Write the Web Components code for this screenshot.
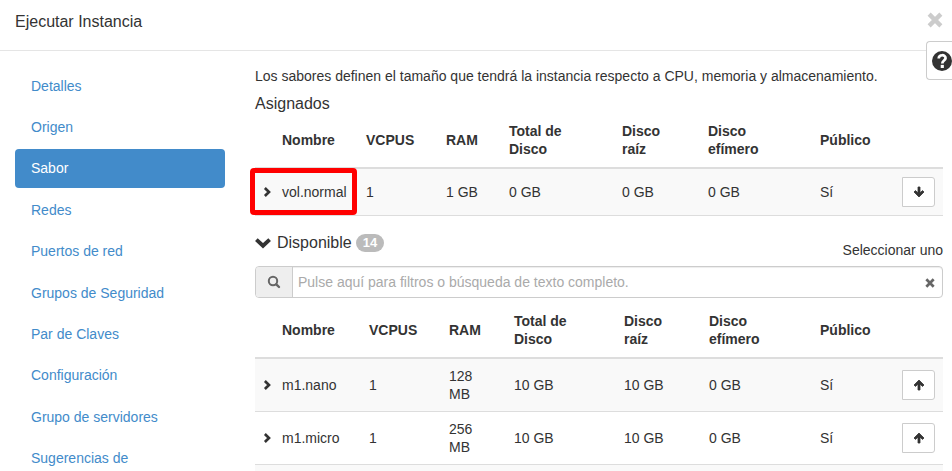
<!DOCTYPE html>
<html lang="es">
<head>
<meta charset="utf-8">
<title>Ejecutar Instancia</title>
<style>
body { margin: 0; background: #fff; color: #333; font: 14px/18px "Liberation Sans", Arial, sans-serif; }
</style>
</head>
<body>
<launch-dialog heading="Ejecutar Instancia">
  <step-nav slot="nav" current="Sabor"></step-nav>
  <flavor-step></flavor-step>
</launch-dialog>

<script>
const ICONS = {
  right: '<path d="M2.4 2 L7.6 7 L2.4 12" fill="none" stroke="currentColor" stroke-width="3.4"/>',
  down: '<path d="M1.2 4 L7 9.4 L12.8 4" fill="none" stroke="currentColor" stroke-width="3.4"/>',
  arrowUp: '<path d="M7 2 L12 7 L10.6 8.4 L8 6.2 V12 H6 V6.2 L3.4 8.4 L2 7 Z" stroke="currentColor" stroke-width=".8" stroke-linejoin="round"/>',
  arrowDown: '<path d="M7 12 L12 7 L10.6 5.6 L8 7.8 V2 H6 V7.8 L3.4 5.6 L2 7 Z" stroke="currentColor" stroke-width=".8" stroke-linejoin="round"/>',
  search: '<circle cx="6" cy="6" r="4.2" fill="none" stroke="currentColor" stroke-width="2"/><path d="M9.3 9.3 L12 12" stroke="currentColor" stroke-width="2.4" stroke-linecap="round"/>',
  times: '<path d="M3.2 3.2 L10.8 10.8 M10.8 3.2 L3.2 10.8" stroke="currentColor" stroke-width="3.8" stroke-linecap="square"/>',
  help: '<circle cx="7" cy="7" r="7"/><path d="M4.7 5.2 C4.8 2.2 9.6 2.3 9.5 5 C9.4 6.7 7.2 6.7 7.2 8.7" fill="none" stroke="#fff" stroke-width="1.9"/><path d="M6.1 9.7 H8.3 V11.9 H6.1 Z" fill="#fff"/>'
};

class UiIcon extends HTMLElement {
  connectedCallback() {
    this.attachShadow({ mode: 'open' }).innerHTML = `
      <style>:host{display:inline-block;width:14px;height:14px;flex:none} svg{display:block;width:100%;height:100%;overflow:visible}</style>
      <svg viewBox="0 0 14 14" fill="currentColor" aria-hidden="true">${ICONS[this.getAttribute('name')]}</svg>`;
  }
}
customElements.define('ui-icon', UiIcon);

class LaunchDialog extends HTMLElement {
  connectedCallback() {
    this.attachShadow({ mode: 'open' }).innerHTML = `
      <style>
        :host{display:block;height:100vh;overflow:hidden}
        header{display:flex;justify-content:space-between;align-items:flex-start;padding:12px 9px 18px 15px;border-bottom:1px solid #e5e5e5}
        h1{margin:0;font-size:16px;line-height:20px;font-weight:400}
        button{font:inherit;cursor:pointer}
        .close{border:0;background:none;padding:0;color:#ccc;line-height:0}
        .close ui-icon{width:16px;height:16px}
        .help{position:absolute;top:41px;right:0;width:26px;height:39px;padding:0 0 0 5px;border:1px solid #ccc;border-right:0;border-radius:4px 0 0 4px;background:#fff;color:#333;line-height:0}
        .help ui-icon{width:20px;height:20px}
        .body{display:grid;grid-template-columns:210px minmax(0,1fr);gap:30px;padding:15px 9px 0 15px}
      </style>
      <header><h1>${this.getAttribute('heading')}</h1>
        <button class="close" aria-label="Cerrar"><ui-icon name="times"></ui-icon></button></header>
      <button class="help" aria-label="Ayuda"><ui-icon name="help"></ui-icon></button>
      <div class="body"><slot name="nav"></slot><slot></slot></div>`;
  }
}
customElements.define('launch-dialog', LaunchDialog);

class StepNav extends HTMLElement {
  connectedCallback() {
    const steps = ['Detalles', 'Origen', 'Sabor', 'Redes', 'Puertos de red', 'Grupos de Seguridad', 'Par de Claves', 'Configuración', 'Grupo de servidores', 'Sugerencias de'];
    const current = this.getAttribute('current');
    this.attachShadow({ mode: 'open' }).innerHTML = `
      <style>
        :host{display:block}
        ul{list-style:none;margin:0;padding:0;display:grid;gap:2px;grid-auto-rows:1fr;min-height:calc(100vh - 59px)}
        li{display:grid}
        a{display:flex;align-items:center;padding:10px 16px;color:#428bca;text-decoration:none;border-radius:4px}
        a[aria-current]{background:#428bca;color:#fff}
      </style>
      <nav><ul>${steps.map(s => `<li><a href="#"${s === current ? ' aria-current="step"' : ''}>${s}</a></li>`).join('')}</ul></nav>`;
  }
}
customElements.define('step-nav', StepNav);

class FlavorTable extends HTMLElement {
  connectedCallback() {
    const widths = this.getAttribute('columns').split(' ');
    const rows = JSON.parse(this.getAttribute('rows'));
    const move = this.getAttribute('move');
    const heads = ['', 'Nombre', 'VCPUS', 'RAM', 'Total de Disco', 'Disco raíz', 'Disco efímero', 'Público', ''];
    this.attachShadow({ mode: 'open' }).innerHTML = `
      <style>
        :host{display:block}
        table{width:100%;table-layout:fixed;border-collapse:separate;border-spacing:0}
        th,td{padding:8px;text-align:left}
        thead th,thead td{padding-bottom:9px;border-bottom:2px solid #ddd}
        .wide{padding-right:20px}
        tbody td{border-bottom:1px solid #ddd}
        td:first-child{padding-right:0}
        tbody tr:nth-child(odd){background:#f9f9f9}
        tbody tr{position:relative}
        button{cursor:pointer;color:#333;line-height:0}
        .toggle{display:block;border:0;background:none;padding:0}
        .toggle ui-icon{width:11px;height:14px}
        .move{display:block;width:33px;height:30px;padding:0;background:#fff;border:1px solid #ccc;border-radius:0 3px 3px 0}
        .mark{position:absolute;left:-5px;top:-1px;width:97px;height:37px;border:5px solid #f00;border-radius:4px;pointer-events:none}
      </style>
      <table><colgroup>${widths.map(w => `<col style="width:${w}px">`).join('')}</colgroup>
      <thead><tr>${heads.map((h, i) => h ? `<th scope="col"${i > 3 && i < 7 ? ' class="wide"' : ''}>${h}</th>` : '<td></td>').join('')}</tr></thead>
      <tbody>${rows.map(r => r.length ? `<tr><td><button class="toggle" aria-label="Ver detalles"><ui-icon name="right"></ui-icon></button>${this.hasAttribute('marked') ? '<div class="mark"></div>' : ''}</td>
        ${r.map((c, i) => `<td${i === 2 ? ' class="wide"' : ''}>${c}</td>`).join('')}
        <td><button class="move" aria-label="Mover ${r[0]}"><ui-icon name="${move}"></ui-icon></button></td></tr>` : '<tr><td colspan="9"></td></tr>').join('')}</tbody></table>`;
  }
}
customElements.define('flavor-table', FlavorTable);

class FilterBar extends HTMLElement {
  connectedCallback() {
    this.attachShadow({ mode: 'open' }).innerHTML = `
      <style>
        :host{display:flex;height:30px;border:1px solid #ccc;border-radius:4px;overflow:hidden;box-shadow:inset 0 1px 1px rgba(0,0,0,.075)}
        label{display:flex;align-items:center;justify-content:center;width:36px;background:#eee;border-right:1px solid #ccc;color:#666}
        input{flex:1;min-width:0;border:0;outline:0;background:none;padding:0 5px;font:inherit;color:#333}
        input::placeholder{color:#aaa;opacity:1}
        button{border:0;background:none;padding:2px 7px 0 0;color:#666;line-height:0}
        button ui-icon{width:10px;height:10px}
      </style>
      <label for="q" aria-label="Filtro"><ui-icon name="search"></ui-icon></label>
      <input id="q" type="text" placeholder="Pulse aquí para filtros o búsqueda de texto completo.">
      <button aria-label="Borrar"><ui-icon name="times"></ui-icon></button>`;
  }
}
customElements.define('filter-bar', FilterBar);

class FlavorStep extends HTMLElement {
  connectedCallback() {
    const assigned = [['vol.normal', '1', '1 GB', '0 GB', '0 GB', '0 GB', 'Sí']];
    const available = [
      ['m1.nano', '1', '128 MB', '10 GB', '10 GB', '0 GB', 'Sí'],
      ['m1.micro', '1', '256 MB', '10 GB', '10 GB', '0 GB', 'Sí'],
      []
    ];
    this.attachShadow({ mode: 'open' }).innerHTML = `
      <style>
        :host{display:block;padding-top:1px}
        p{margin:0 0 9px}
        h2{margin:0;font-size:16px;line-height:20px;font-weight:400}
        .bar{display:flex;justify-content:space-between;align-items:flex-end;padding:17px 0 7px}
        .bar h2{display:flex;align-items:center;padding-bottom:6px}
        .bar ui-icon{width:16px;height:16px;margin-right:6px}
        .count{margin-left:4px;background:#bbb;color:#fff;font-size:13px;line-height:18px;font-weight:700;padding:0 7px;border-radius:9px}
        filter-bar{margin-bottom:6px}
      </style>
      <p>Los sabores definen el tamaño que tendrá la instancia respecto a CPU, memoria y almacenamiento.</p>
      <h2>Asignados</h2>
      <flavor-table marked move="arrowDown" columns="19 84 80 63 113 86 112 82 49" rows='${JSON.stringify(assigned)}'></flavor-table>
      <div class="bar"><h2><ui-icon name="down"></ui-icon>Disponible<span class="count">14</span></h2><span>Seleccionar uno</span></div>
      <filter-bar></filter-bar>
      <flavor-table move="arrowUp" columns="19 87 80 65 110 85 111 82 49" rows='${JSON.stringify(available)}'></flavor-table>`;
  }
}
customElements.define('flavor-step', FlavorStep);
</script>
</body>
</html>
